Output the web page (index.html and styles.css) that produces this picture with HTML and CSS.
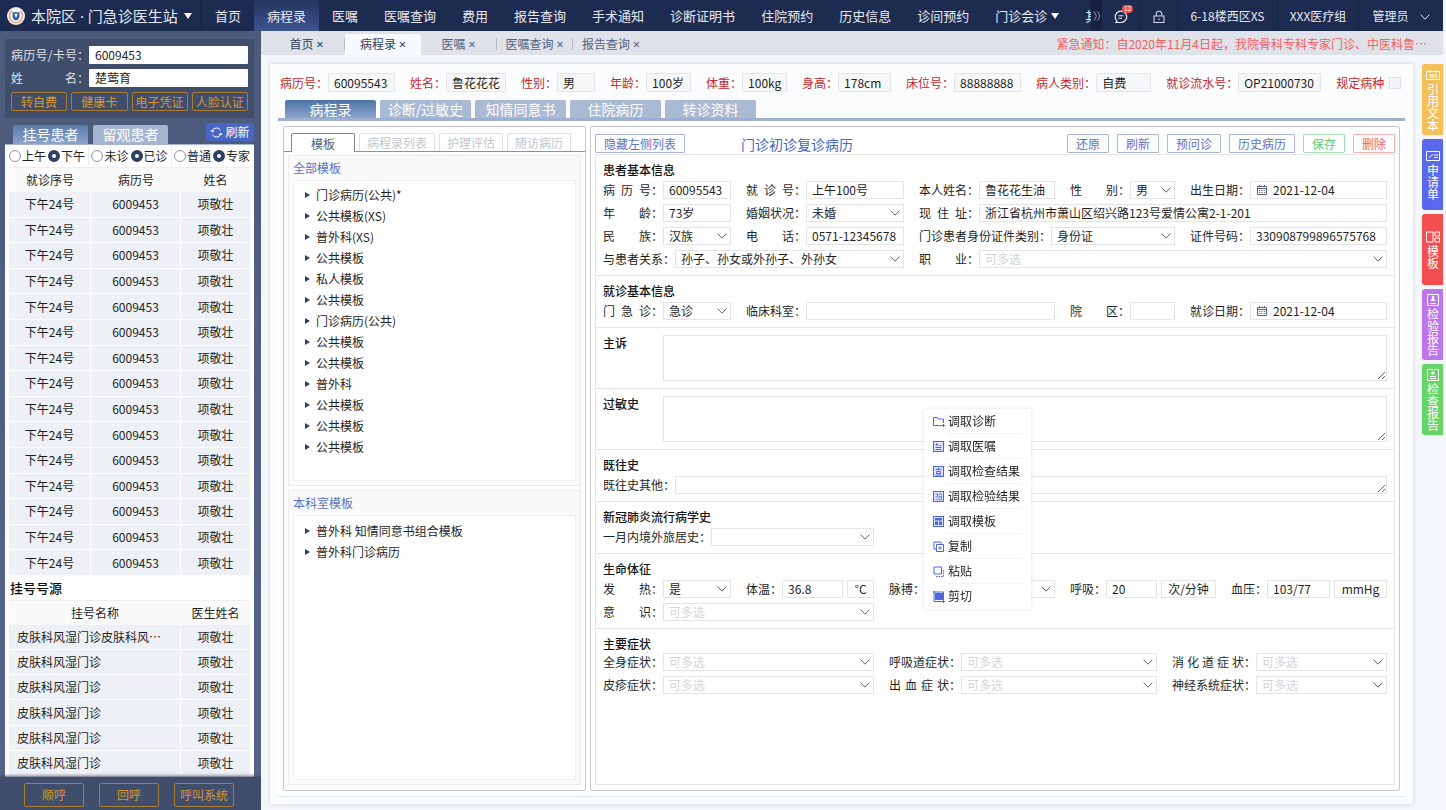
FILE: index.html
```html
<!DOCTYPE html>
<html lang="zh-CN">
<head>
<meta charset="utf-8">
<title>门急诊医生站</title>
<link rel="stylesheet" href="styles.css">
</head>
<body>
<svg class="sprite" aria-hidden="true">
  <symbol id="chev" viewBox="0 0 10 6"><path d="M.6.6 5 5.2 9.4.6" fill="none" stroke="currentColor"/></symbol>
  <symbol id="cal" viewBox="0 0 10 10"><path d="M.5 1.5h9v8h-9zM.5 3.5h9M2.5 0v2M7.5 0v2" fill="none" stroke="currentColor"/><path d="M2 5.5h6M2 7.5h6" stroke="currentColor" stroke-dasharray="1.2 1.2"/></symbol>
</svg>

<header class="topbar">
  <button class="brand" type="button">
    <svg class="logo" viewBox="0 0 18 18"><circle cx="9" cy="9" r="9" fill="#f4f1ec"/><circle cx="9" cy="9" r="6.6" fill="none" stroke="#d9a47a" stroke-width="1.4" stroke-dasharray="32 9.5" transform="rotate(-48 9 9)"/><path d="M5.6 5.2h6.8v4.2c0 2.200-1.800 3.400-3.400 4-1.600-.6-3.400-1.800-3.400-4z" fill="#2d5f9e"/><path d="M7.200 6.800h3.600L9 11z" fill="#fff"/></svg>
    <span>本院区<i class="dot"> · </i>门急诊医生站</span><i class="caret"></i>
  </button>
  <nav class="nav">
    <a href="#">首页</a><a href="#" class="is-active">病程录</a><a href="#">医嘱</a><a href="#">医嘱查询</a><a href="#">费用</a><a href="#">报告查询</a><a href="#">手术通知</a><a href="#">诊断证明书</a><a href="#">住院预约</a><a href="#">历史信息</a><a href="#">诊间预约</a><a href="#">门诊会诊<i class="caret caret-sm"></i></a><a href="#">其他</a>
  </nav>
  <button class="more" type="button" aria-label="更多"><svg viewBox="0 0 8 10"><path d="M1 .5 3.500 5 1 9.500M4.500.5 7 5 4.500 9.500" fill="none" stroke="#8b95b0"/></svg></button>
  <div class="tools">
    <button class="tool tool-icon" type="button" aria-label="消息"><svg viewBox="0 0 14 14"><path d="M2 12.500h5.200A5.700 5.700 0 1 0 1.800 9.200L3 11.200z" fill="none" stroke="#e8ecf5" stroke-width="1.200"/><path d="M4.500 5.800h5M4.500 8.300h3.500" stroke="#e8ecf5"/></svg><span class="badge">12</span></button>
    <button class="tool tool-icon" type="button" aria-label="锁定"><svg viewBox="0 0 14 14"><path d="M2 6h10v6.500H2zM4.200 6V4a2.800 2.800 0 0 1 5.600 0v2M7 8.500v1.800" fill="none" stroke="#cfd5e4" stroke-width="1.100"/></svg></button>
    <button class="tool tool-dept" type="button">6-18楼西区XS</button>
    <button class="tool tool-group" type="button">XXX医疗组</button>
    <button class="tool tool-user" type="button">管理员<svg class="chev"><use href="#chev"/></svg></button>
  </div>
</header>

<div class="shell">
  <aside class="sidebar">
    <form class="search">
      <div class="search-row"><label for="card"><span>病历号/卡号</span>：</label><input id="card" value="6009453"></div>
      <div class="search-row"><label for="pname"><span>姓 名</span>：</label><input id="pname" value="楚莺育"></div>
      <div class="search-actions"><button type="button">转自费</button><button type="button">健康卡</button><button type="button">电子凭证</button><button type="button">人脸认证</button></div>
    </form>
    <div class="side-tabs">
      <button type="button" class="side-tab is-active">挂号患者</button><button type="button" class="side-tab">留观患者</button>
      <button type="button" class="refresh"><svg viewBox="0 0 13 13"><path d="M2.200 5A4.600 4.600 0 0 1 10.500 4.200M10.800 8A4.600 4.600 0 0 1 2.500 8.800M.8 4l1.400 2 1.800-1.400M12.200 9l-1.400-2L9 8.400" fill="none" stroke="#fff"/></svg>刷新</button>
    </div>
    <div class="side-body">
      <div class="filters">
        <div><label><input type="radio" name="t">上午</label><label><input type="radio" name="t" checked>下午</label></div>
        <div><label><input type="radio" name="s">未诊</label><label><input type="radio" name="s" checked>已诊</label></div>
        <div><label><input type="radio" name="k">普通</label><label><input type="radio" name="k" checked>专家</label></div>
      </div>
      <table class="grid patients">
        <colgroup><col class="c-no"><col class="c-id"><col class="c-name"></colgroup>
        <thead><tr><th>就诊序号</th><th>病历号</th><th>姓名</th></tr></thead>
        <tbody>
          <tr><td>下午24号</td><td>6009453</td><td>项敬壮</td></tr>
          <tr><td>下午24号</td><td>6009453</td><td>项敬壮</td></tr>
          <tr><td>下午24号</td><td>6009453</td><td>项敬壮</td></tr>
          <tr><td>下午24号</td><td>6009453</td><td>项敬壮</td></tr>
          <tr><td>下午24号</td><td>6009453</td><td>项敬壮</td></tr>
          <tr><td>下午24号</td><td>6009453</td><td>项敬壮</td></tr>
          <tr><td>下午24号</td><td>6009453</td><td>项敬壮</td></tr>
          <tr><td>下午24号</td><td>6009453</td><td>项敬壮</td></tr>
          <tr><td>下午24号</td><td>6009453</td><td>项敬壮</td></tr>
          <tr><td>下午24号</td><td>6009453</td><td>项敬壮</td></tr>
          <tr><td>下午24号</td><td>6009453</td><td>项敬壮</td></tr>
          <tr><td>下午24号</td><td>6009453</td><td>项敬壮</td></tr>
          <tr><td>下午24号</td><td>6009453</td><td>项敬壮</td></tr>
          <tr><td>下午24号</td><td>6009453</td><td>项敬壮</td></tr>
          <tr><td>下午24号</td><td>6009453</td><td>项敬壮</td></tr>
        </tbody>
      </table>
      <h2 class="side-title">挂号号源</h2>
      <table class="grid sources">
        <colgroup><col><col class="c-name"></colgroup>
        <thead><tr><th>挂号名称</th><th>医生姓名</th></tr></thead>
        <tbody>
          <tr><td>皮肤科风湿门诊皮肤科风⋯</td><td>项敬壮</td></tr>
          <tr><td>皮肤科风湿门诊</td><td>项敬壮</td></tr>
          <tr><td>皮肤科风湿门诊</td><td>项敬壮</td></tr>
          <tr><td>皮肤科风湿门诊</td><td>项敬壮</td></tr>
          <tr><td>皮肤科风湿门诊</td><td>项敬壮</td></tr>
          <tr><td>皮肤科风湿门诊</td><td>项敬壮</td></tr>
        </tbody>
      </table>
    </div>
    <div class="side-foot"><button type="button">顺呼</button><button type="button">回呼</button><button type="button">呼叫系统</button></div>
  </aside>

  <main class="main">
    <div class="pages">
      <button type="button" class="page page-home">首页 <i>×</i></button>
      <button type="button" class="page is-active">病程录 <i>×</i></button>
      <button type="button" class="page">医嘱 <i>×</i></button>
      <button type="button" class="page">医嘱查询 <i>×</i></button>
      <button type="button" class="page page-last">报告查询 <i>×</i></button>
      <p class="notice">紧急通知：自2020年11月4日起，我院骨科专科专家门诊、中医科鲁⋯</p>
    </div>

    <div class="work">
      <section class="card">
        <div class="info">
          <div><span>病历号：</span><output class="w67">60095543</output></div>
          <div><span>姓名：</span><output class="w60">鲁花花花</output></div>
          <div><span>性别：</span><output class="w38">男</output></div>
          <div><span>年龄：</span><output class="w45">100岁</output></div>
          <div><span>体重：</span><output class="w45">100kg</output></div>
          <div><span>身高：</span><output class="w53">178cm</output></div>
          <div><span>床位号：</span><output class="w67">88888888</output></div>
          <div><span>病人类别：</span><output class="w55">自费</output></div>
          <div><span>就诊流水号：</span><output class="w83">OP21000730</output></div>
          <div><label for="spec">规定病种</label><input id="spec" type="checkbox"></div>
        </div>
        <div class="rec-tabs"><button type="button" class="is-active">病程录</button><button type="button">诊断/过敏史</button><button type="button">知情同意书</button><button type="button">住院病历</button><button type="button">转诊资料</button></div>

        <div class="panes">
          <div class="pane pane-left">
            <div class="tpl-tabs"><button type="button" class="is-active">模板</button><button type="button" class="t-wide">病程录列表</button><button type="button">护理评估</button><button type="button">随访病历</button></div>
            <section class="tree tree-all">
              <h3>全部模板</h3>
              <ul>
                <li>门诊病历(公共)*</li><li>公共模板(XS)</li><li>普外科(XS)</li><li>公共模板</li><li>私人模板</li><li>公共模板</li><li>门诊病历(公共)</li><li>公共模板</li><li>公共模板</li><li>普外科</li><li>公共模板</li><li>公共模板</li><li>公共模板</li>
              </ul>
            </section>
            <section class="tree tree-dept">
              <h3>本科室模板</h3>
              <ul><li>普外科 知情同意书组合模板</li><li>普外科门诊病历</li></ul>
            </section>
          </div>

          <div class="pane pane-right">
            <div class="bar">
              <button type="button" class="btn">隐藏左侧列表</button>
              <h1>门诊初诊复诊病历</h1>
              <div class="bar-actions"><button type="button" class="btn">还原</button><button type="button" class="btn">刷新</button><button type="button" class="btn">预问诊</button><button type="button" class="btn">历史病历</button><button type="button" class="btn btn-save">保存</button><button type="button" class="btn btn-del">删除</button></div>
            </div>

            <form class="record">
              <section class="sec">
                <h4>患者基本信息</h4>
                <div class="rows rows-base">
                  <div class="f"><label for="a1"><span>病 历 号</span>：</label><input id="a1" value="60095543"></div>
                  <div class="f"><label for="a2"><span>就 诊 号</span>：</label><input id="a2" value="上午100号"></div>
                  <div class="f"><label for="a3"><span>本人姓名</span>：</label><input id="a3" value="鲁花花生油"></div>
                  <div class="f"><label for="a4"><span>性 别</span>：</label><div class="sel"><select id="a4"><option>男</option></select><svg class="chev"><use href="#chev"/></svg></div></div>
                  <div class="f"><label for="a5"><span>出生日期</span>：</label><div class="date"><svg><use href="#cal"/></svg><input id="a5" value="2021-12-04"></div></div>

                  <div class="f"><label for="b1"><span>年 龄</span>：</label><input id="b1" value="73岁"></div>
                  <div class="f"><label for="b2"><span>婚姻状况</span>：</label><div class="sel"><select id="b2"><option>未婚</option></select><svg class="chev"><use href="#chev"/></svg></div></div>
                  <div class="f span3"><label for="b3"><span>现 住 址</span>：</label><input id="b3" value="浙江省杭州市萧山区绍兴路123号爱情公寓2-1-201"></div>

                  <div class="f"><label for="c1"><span>民 族</span>：</label><div class="sel"><select id="c1"><option>汉族</option></select><svg class="chev"><use href="#chev"/></svg></div></div>
                  <div class="f"><label for="c2"><span>电 话</span>：</label><input id="c2" value="0571-12345678"></div>
                  <div class="f span2 l132"><label for="c3"><span>门诊患者身份证件类别</span>：</label><div class="sel"><select id="c3"><option>身份证</option></select><svg class="chev"><use href="#chev"/></svg></div></div>
                  <div class="f"><label for="c4"><span>证件号码</span>：</label><input id="c4" value="330908799896575768"></div>

                  <div class="f span2 l72"><label for="d1"><span>与患者关系</span>：</label><div class="sel"><select id="d1"><option>孙子、孙女或外孙子、外孙女</option></select><svg class="chev"><use href="#chev"/></svg></div></div>
                  <div class="f span3"><label for="d2"><span>职 业</span>：</label><div class="sel empty"><select id="d2"><option>可多选</option></select><svg class="chev"><use href="#chev"/></svg></div></div>
                </div>
              </section>

              <section class="sec">
                <h4>就诊基本信息</h4>
                <div class="rows rows-base">
                  <div class="f"><label for="e1"><span>门 急 诊</span>：</label><div class="sel"><select id="e1"><option>急诊</option></select><svg class="chev"><use href="#chev"/></svg></div></div>
                  <div class="f span2"><label for="e2"><span>临床科室</span>：</label><input id="e2"></div>
                  <div class="f"><label for="e3"><span>院 区</span>：</label><input id="e3"></div>
                  <div class="f"><label for="e4"><span>就诊日期</span>：</label><div class="date"><svg><use href="#cal"/></svg><input id="e4" value="2021-12-04"></div></div>
                </div>
              </section>

              <section class="sec sec-text"><h4><label for="g1">主诉</label></h4><textarea id="g1"></textarea></section>
              <section class="sec sec-text"><h4><label for="g2">过敏史</label></h4><textarea id="g2"></textarea></section>

              <section class="sec">
                <h4>既往史</h4>
                <div class="f l72"><label for="h1"><span>既往史其他</span>：</label><textarea id="h1" class="one-line"></textarea></div>
              </section>

              <section class="sec">
                <h4>新冠肺炎流行病学史</h4>
                <div class="rows rows-sym"><div class="f l108"><label for="i1"><span>一月内境外旅居史</span>：</label><div class="sel"><select id="i1"><option></option></select><svg class="chev"><use href="#chev"/></svg></div></div></div>
              </section>

              <section class="sec">
                <h4>生命体征</h4>
                <div class="rows rows-vital">
                  <div class="f"><label for="j1"><span>发 热</span>：</label><div class="sel"><select id="j1"><option>是</option></select><svg class="chev"><use href="#chev"/></svg></div></div>
                  <div class="f l36"><label for="j2"><span>体温</span>：</label><input id="j2" value="36.8"><span class="unit u27">°C</span></div>
                  <div class="f l36"><label for="j3"><span>脉搏</span>：</label><div class="sel"><select id="j3"><option></option></select><svg class="chev"><use href="#chev"/></svg></div></div>
                  <div class="f l36"><label for="j4"><span>呼吸</span>：</label><input id="j4" value="20"><span class="unit u55">次/分钟</span></div>
                  <div class="f l36"><label for="j5"><span>血压</span>：</label><input id="j5" value="103/77"><span class="unit u53">mmHg</span></div>
                  <div class="f span2"><label for="j6"><span>意 识</span>：</label><div class="sel empty"><select id="j6"><option>可多选</option></select><svg class="chev"><use href="#chev"/></svg></div></div>
                </div>
              </section>

              <section class="sec sec-tight">
                <h4>主要症状</h4>
                <div class="rows rows-sym">
                  <div class="f"><label for="k1"><span>全身症状</span>：</label><div class="sel empty"><select id="k1"><option>可多选</option></select><svg class="chev"><use href="#chev"/></svg></div></div>
                  <div class="f l72"><label for="k2"><span>呼吸道症状</span>：</label><div class="sel empty"><select id="k2"><option>可多选</option></select><svg class="chev"><use href="#chev"/></svg></div></div>
                  <div class="f l84"><label for="k3"><span>消 化 道 症 状</span>：</label><div class="sel empty"><select id="k3"><option>可多选</option></select><svg class="chev"><use href="#chev"/></svg></div></div>
                  <div class="f"><label for="k4"><span>皮疹症状</span>：</label><div class="sel empty"><select id="k4"><option>可多选</option></select><svg class="chev"><use href="#chev"/></svg></div></div>
                  <div class="f l72"><label for="k5"><span>出 血 症 状</span>：</label><div class="sel empty"><select id="k5"><option>可多选</option></select><svg class="chev"><use href="#chev"/></svg></div></div>
                  <div class="f l84"><label for="k6"><span>神经系统症状</span>：</label><div class="sel empty"><select id="k6"><option>可多选</option></select><svg class="chev"><use href="#chev"/></svg></div></div>
                </div>
              </section>

              <div class="menu" role="menu">
                <button type="button"><svg viewBox="0 0 12 12"><path d="M6 9.500H.5v-8h4l1 1.500h5v4M6.500 9.500h5M9.800 7.800l1.700 1.700-1.700 1.700" fill="none" stroke="currentColor"/></svg><span>调取诊断</span></button>
                <button type="button"><svg viewBox="0 0 12 12"><rect x=".5" y=".5" width="10" height="10" fill="#dfe5ff" stroke="currentColor"/><path d="M2.500 3.500h2.500M3.700 2.300v2.500M6.500 4.500h2M2.500 6.500h6M2.500 8.500h6" stroke="currentColor"/></svg><span>调取医嘱</span></button>
                <button type="button"><svg viewBox="0 0 12 12"><rect x=".5" y=".5" width="10" height="10" fill="#dfe5ff" stroke="currentColor"/><path d="M2.500 3.300h6M5.500 2v2.500M3.500 5.500h4v2h-4zM2.500 9h6" fill="none" stroke="currentColor"/></svg><span>调取检查结果</span></button>
                <button type="button"><svg viewBox="0 0 12 12"><rect x=".5" y=".5" width="10" height="10" fill="#dfe5ff" stroke="currentColor"/><path d="M2.500 3h2v3h-2M2.500 8.500h2M7.500 2 5.800 4.500M7.500 2l1.500 2.500M6 5.500h3M6 6v2.500M8.500 6v2.500M5.500 8.800h4" fill="none" stroke="currentColor" stroke-width=".8"/></svg><span>调取检验结果</span></button>
                <button type="button"><svg viewBox="0 0 12 12"><rect x=".5" y=".5" width="10" height="10" fill="#dfe5ff" stroke="currentColor"/><path d="M2 2h7v2.500H2zM2 5.500h3V9H2zM6 5.500h3V9H6z" fill="currentColor"/></svg><span>调取模板</span></button>
                <button type="button"><svg viewBox="0 0 12 12"><path d="M3 8H1V1h7v2M3.500 3.500h7v7h-7zM7 5.300v3.400M5.300 7h3.400" fill="none" stroke="currentColor"/></svg><span>复制</span></button>
                <button type="button"><svg viewBox="0 0 12 12"><path d="M1 1h7.500v7H1z" fill="none" stroke="currentColor"/><path d="M3 10.500h7.500V3" fill="none" stroke="currentColor" stroke-dasharray="1.500 1"/></svg><span>粘贴</span></button>
                <button type="button"><svg viewBox="0 0 12 12"><path d="M2 2h8v7H2z" fill="currentColor"/><path d="M1 0v10.500h11M0 1h10.500v11" fill="none" stroke="currentColor"/></svg><span>剪切</span></button>
              </div>
            </form>
          </div>
        </div>
      </section>

      <aside class="rail">
        <button type="button" class="r1"><svg viewBox="0 0 14 12"><path d="M.5 2.500h13v8H.5zM4 .5v3.500M10 .5v3.500M3 6h8M3 8h8" fill="none" stroke="#fff"/></svg><span>引用文本</span></button>
        <button type="button" class="r2"><svg viewBox="0 0 14 12"><path d="M.5 1.500h13v9H.5zM8 5h4M8 7.500h4M3 7.500l4-3" fill="none" stroke="#fff"/></svg><span>申请单</span></button>
        <button type="button" class="r3"><svg viewBox="0 0 14 12"><path d="M.5 1h6.500v10H.5zM9 1h4.500v4H9zM9 7h4.500v4H9z" fill="none" stroke="#fff"/></svg><span>模板</span></button>
        <button type="button" class="r4"><svg viewBox="0 0 12 12"><path d="M.5.5h11v11H.5zM3 9.500h6" fill="none" stroke="#fff"/><path d="M6 2a1.300 1.300 0 0 1 .8 2.300L8.800 7H3.200l2-2.700A1.300 1.300 0 0 1 6 2z" fill="#fff"/></svg><span>检验报告</span></button>
        <button type="button" class="r5"><svg viewBox="0 0 12 12"><path d="M.5.5h11v11H.5zM3 7.500h6M3 9.500h6" fill="none" stroke="#fff"/><circle cx="6" cy="4" r="1.700" fill="#fff"/></svg><span>检查报告</span></button>
      </aside>
    </div>
  </main>
</div>
</body>
</html>
```
FILE: styles.css
```css
* { box-sizing: border-box; }
body, h1, h2, h3, h4, p, ul { margin: 0; padding: 0; }
body {
  display: flex;
  flex-direction: column;
  min-height: 100vh;
  padding-right: 3px;
  background: #f3f5f8;
  color: #1f1f1f;
  font: 12px/18px "Noto Sans CJK SC", "Noto Sans", sans-serif;
}
button, input, select, textarea { margin: 0; font: inherit; color: inherit; }
button { padding: 0; border: 0; background: none; white-space: nowrap; cursor: pointer; }
a { color: inherit; text-decoration: none; }
i { font-style: normal; }
ul { list-style: none; }
.sprite { position: absolute; width: 0; height: 0; }
.chev { width: 10px; height: 6px; color: #5b6378; }

/* top bar */
.topbar { display: flex; height: 31px; background: #1e2b50; color: #e6eaf3; }
.brand {
  display: flex; align-items: center; flex: none;
  width: 202px; padding-left: 7px;
  border-right: 1px solid #141f3e;
  font-size: 15px;
}
.logo { width: 18px; height: 18px; margin-right: 6px; }
.dot { font-family: "Noto Sans", sans-serif; }
.caret { border: 4px solid transparent; border-top: 6px solid #fff; border-bottom: 0; margin-left: 6px; }
.caret-sm { margin-left: 4px; }
.nav { display: flex; flex: 1; min-width: 0; overflow: hidden; font-size: 13px; line-height: 31px; }
.nav a { display: flex; flex: none; align-items: center; padding: 0 13px; }
.nav .is-active { background: linear-gradient(#24345f, #3d5590); }
.more { flex: none; width: 11px; background: #16203f; }
.more svg { width: 8px; height: 10px; }
.tools { display: flex; flex: none; }
.tool { position: relative; border-right: 1px solid #192445; }
.tool:last-child { border: 0; }
.tool svg { vertical-align: middle; }
.tool-icon { width: 38px; }
.tool-icon svg { width: 14px; height: 14px; }
.tool-dept { width: 100px; }
.tool-group { width: 81px; }
.tool-user { width: 84px; }
.tool-user .chev { margin-left: 11px; color: #dfe4f0; }
.badge {
  position: absolute; top: 5px; right: 6px;
  padding: 0 2px; border-radius: 4px;
  background: #f0524f; color: #fff; font-size: 6px; line-height: 8px;
}

.shell { display: flex; flex: 1; }

/* sidebar */
.sidebar {
  display: flex; flex-direction: column; flex: none;
  width: 261px; padding-top: 8px;
  background: linear-gradient(#4c5b7c, #55658a);
}
.search {
  display: flex; flex-direction: column; gap: 5px;
  margin: 0 7px 0 5px; padding: 7px 6px;
  background: #414e6b;
}
.search-row { display: flex; }
.search-row label { display: flex; width: 78px; color: #dfe3ec; }
.search-row span { flex: 1; text-align-last: justify; }
.search-row input { flex: 1; min-width: 0; height: 18px; padding: 0 6px; border: 0; border-radius: 1px; background: #fff; }
.search-actions { display: flex; gap: 4px; }
.search-actions button { flex: 1; height: 19px; line-height: 17px; }
.search-actions button, .side-foot button { border: 1px solid #a97c30; border-radius: 2px; color: #d6962b; }
.side-tabs { display: flex; align-items: flex-end; gap: 5px; height: 26px; margin: 0 7px 0 13px; }
.side-tab {
  width: 75px; height: 19px; border-radius: 2px 2px 0 0;
  background: #a4b4d1; color: #fff; font-size: 14px; line-height: 19px;
}
.side-tab.is-active { background: linear-gradient(#5b7bab, #8ba5cb); }
.refresh {
  display: flex; align-items: center; justify-content: center; gap: 2px;
  width: 48px; height: 18px; margin: 0 0 3px auto;
  border-radius: 2px; background: #4a66c4; color: #fff;
}
.refresh svg { width: 13px; height: 13px; }
.side-body { flex: 1; margin: 0 7px 0 5px; padding: 0 4px; border-top: 1px solid #a4b4d1; background: #fff; }
.filters { display: flex; justify-content: space-between; height: 22px; }
.filters div { display: flex; align-items: center; gap: 2px; }
.filters div + div { border-left: 1px solid #eee; padding-left: 2px; }
.filters label { display: flex; align-items: center; gap: 1px; }
.filters input {
  appearance: none; width: 12px; height: 12px;
  border: 1px solid #8c93a3; border-radius: 50%; background: #fff;
}
.filters input:checked { border: 4px solid #2f3e63; }
.grid { width: 100%; table-layout: fixed; border-collapse: separate; border-spacing: 0; text-align: center; }
.grid th { height: 25px; padding: 0; border-top: 1px solid #eee; background: #fafafa; font-weight: 400; }
.grid td {
  padding: 0; background: #edf1f5;
  border-right: 1px solid #fff; border-bottom: 1px solid #fff;
}
.grid td:last-child { border-right: 0; }
.patients { height: 409px; }
.sources { height: 176px; }
.sources td:first-child { padding-left: 8px; text-align: left; }
.c-no { width: 82px; }
.c-name { width: 69px; }
.side-title { padding: 2px 1px; font-size: 13px; line-height: 20px; font-weight: 500; color: #111; }
.side-foot {
  display: flex; justify-content: center; gap: 15px;
  padding: 6px 3px 3px 0; background: #414e6b; box-shadow: 0 -1px 3px #414e6b;
}
.side-foot button { width: 60px; height: 24px; }

/* page tabs */
.main { display: flex; flex-direction: column; flex: 1; min-width: 0; background: #f4f7fa; }
.pages { display: flex; height: 24px; padding-right: 16px; background: #dfe2e8; color: #56617e; }
.page {
  flex: none; width: 76px; padding-top: 2px;
  border-right: 1px solid;
  border-image: linear-gradient(transparent 30%, #b5bac6 30%, #b5bac6 75%, transparent 75%) 1;
}
.page-home { width: 84px; padding-left: 8px; color: #2f3d60; }
.page.is-active { margin-top: 3px; padding: 0 0 2px; border: 0; border-radius: 3px 3px 0 0; background: #f8fbfd; color: #2f3d60; }
.page-last { border: 0; }
.page i { font-family: "Noto Sans", sans-serif; font-size: 13px; }
.notice { flex: 1; min-width: 0; overflow: hidden; padding-top: 4px; color: #f0615f; text-align: right; white-space: nowrap; }
.work { display: flex; flex: 1; gap: 9px; padding: 9px 0 6px 9px; }

/* patient card */
.card {
  display: flex; flex-direction: column; flex: 1; min-width: 0;
  padding: 9px 8px 7px; background: #fafcfe;
  box-shadow: 0 0 4px #c9d0da;
}
.info { display: flex; gap: 15px; padding-left: 2px; line-height: 19px; }
.info div { display: flex; flex: none; color: #c4282d; white-space: nowrap; }
.info output { height: 19px; padding-left: 5px; border: 1px solid #e3e5ea; border-radius: 1px; background: #f6f7f9; color: #1f1f1f; line-height: 17px; }
.info input { appearance: none; align-self: center; width: 12px; height: 12px; margin-left: 5px; border: 1px solid #e0e2e8; background: #f4f5f8; }
.w38 { width: 38px; } .w45 { width: 45px; } .w53 { width: 53px; } .w55 { width: 55px; }
.w60 { width: 60px; } .w67 { width: 67px; } .w83 { width: 83px; }
.rec-tabs { display: flex; gap: 4px; margin-top: 8px; padding-left: 7px; border-bottom: 3px solid #9eafd0; }
.rec-tabs button { width: 91px; height: 18px; border-radius: 2px 2px 0 0; background: #aab9d4; color: #fff; font-size: 14px; line-height: 18px; }
.rec-tabs .is-active { background: linear-gradient(#4e72a8, #8ca5cb); }
.panes { display: flex; flex: 1; gap: 4px; padding: 5px; background: #fff; border-bottom: 1px solid #dbe7f6; }
.pane { display: flex; flex-direction: column; border: 1px solid #c3c7ce; border-radius: 2px; padding: 6px 4px 5px; }
.pane-left { flex: none; width: 303px; }
.pane-right { flex: 1; min-width: 0; }

/* template panel */
.tpl-tabs { display: flex; gap: 4px; margin: 0 -4px 3px; padding-left: 7px; border-bottom: 1px solid #8d919b; }
.tpl-tabs button { width: 64px; height: 18px; border: 1px solid #dcdee2; border-bottom: 0; border-radius: 2px 2px 0 0; color: #c3c6cc; line-height: 17px; }
.tpl-tabs .t-wide { width: 76px; }
.tpl-tabs .is-active { margin-bottom: -1px; height: 19px; border-color: #7f859a; background: #fff; color: #56617e; }
.tree { display: flex; flex-direction: column; min-height: 0; padding: 0 4px 4px; border: 1px solid #ececee; background: #fafafa; }
.tree-all { flex: 332 0 0; margin-bottom: 4px; }
.tree-dept { flex: 295 0 0; }
.tree h3 { color: #5b72c4; font-weight: 400; font-size: 12px; line-height: 24px; }
.tree ul { flex: 1; padding: 4px 0 0 11px; border: 1px solid #efefef; background: #fff; }
.tree-all ul { padding-top: 3px; }
.tree li { display: flex; align-items: center; height: 21px; }
.tree li::before { content: ""; margin-right: 6px; border: 3px solid transparent; border-left: 5px solid #2f3e63; border-right: 0; }

/* record form */
.bar { display: flex; align-items: center; padding: 1px 0; }
.btn { height: 19px; padding: 0 8px; border: 1px solid #a9b6dc; border-radius: 1px; background: #fff; color: #5b72c4; line-height: 17px; }
.btn-save { border-color: #a6dfb2; color: #5fc777; }
.btn-del { border-color: #f5b1b0; color: #f0615f; }
.bar h1 { margin-left: 56px; color: #4a66c0; font-size: 14px; font-weight: 400; line-height: 18px; }
.bar-actions { display: flex; gap: 8px; margin-left: auto; }
.record { position: relative; flex: 1; border: 1px solid #e6e6e6; }
.sec { padding: 7px; border-bottom: 1px solid #e2e4e6; }
.sec:last-of-type { border-bottom: 0; }
.sec h4 { margin-bottom: 3px; font-size: 12px; line-height: 16px; font-weight: 500; color: #111; }
.sec-tight h4 { margin-bottom: 1px; }
.rows { display: grid; gap: 5px 15px; }
.rows-base { grid-template-columns: 128fr 158fr 136fr 105fr 197fr; }
.rows-vital { grid-template-columns: 128fr 128fr 166fr 146fr 156fr; }
.rows-sym { grid-template-columns: 271fr 268fr 215fr; }
.span2 { grid-column: span 2; }
.span3 { grid-column: span 3; }
.f { display: flex; min-width: 0; }
.f label { display: flex; flex: none; width: 60px; white-space: nowrap; }
.f label span { flex: 1; text-align-last: justify; }
.l36 label { width: 36px; }
.l72 label { width: 72px; }
.l84 label { width: 84px; }
.l108 label { width: 108px; }
.l132 label { width: 132px; }
.f input, .f select, .unit, .date { height: 18px; border: 1px solid #e2e4e6; background: #fff; line-height: 16px; }
.f input { flex: 1; width: 0; min-width: 0; padding: 0 5px 1px; border-radius: 0; }
.sel { display: grid; flex: 1; min-width: 0; align-items: center; }
.sel select, .sel .chev { grid-area: 1 / 1; }
.sel select { appearance: none; width: 100%; padding: 0 18px 0 5px; border-radius: 0; }
.sel .chev { justify-self: end; margin-right: 4px; pointer-events: none; }
.empty select { color: #d3d5da; }
.date { display: flex; flex: 1; align-items: center; min-width: 0; padding-left: 6px; }
.date svg { flex: none; width: 10px; height: 10px; color: #5b6378; }
.f .date input { height: 16px; padding-left: 6px; border: 0; background: none; }
.unit { margin-left: 4px; text-align: center; }
.u27 { width: 27px; } .u53 { width: 53px; } .u55 { width: 55px; }
.sec textarea { display: block; flex: 1; height: 46px; min-height: 18px; padding: 0 5px; border: 1px solid #e2e4e6; border-radius: 0; resize: vertical; }
.sec textarea.one-line { height: 18px; }
.sec-text { display: flex; }
.sec-text h4 { flex: none; width: 60px; margin: 0; }

/* context menu */
.menu { position: absolute; left: 328px; top: 254px; width: 107px; background: #fff; box-shadow: 0 0 4px #dde1e8; }
.menu button { display: flex; align-items: center; width: 100%; height: 25px; padding: 0 9px; }
.menu svg { flex: none; width: 12px; height: 12px; margin-right: 3px; color: #4a66e0; }
.menu span { flex: 1; text-align: left; line-height: 24px; border-bottom: 1px solid #f3f3f5; }
.menu button:last-child span { border-color: transparent; }

/* right rail */
.rail { display: flex; flex-direction: column; flex: none; gap: 4px; width: 21px; }
.rail button { display: flex; flex-direction: column; align-items: center; justify-content: center; gap: 2px; height: 71px; border-radius: 3px 0 0 3px; color: #fff; }
.rail svg { width: 14px; height: 12px; }
.rail span { writing-mode: vertical-rl; line-height: 14px; }
.r1 { background: #f3bf58; }
.r2 { background: #5a68ee; }
.r3 { background: #f24d4f; }
.r4 { background: #bd74ec; }
.r5 { background: #66d468; }
```
